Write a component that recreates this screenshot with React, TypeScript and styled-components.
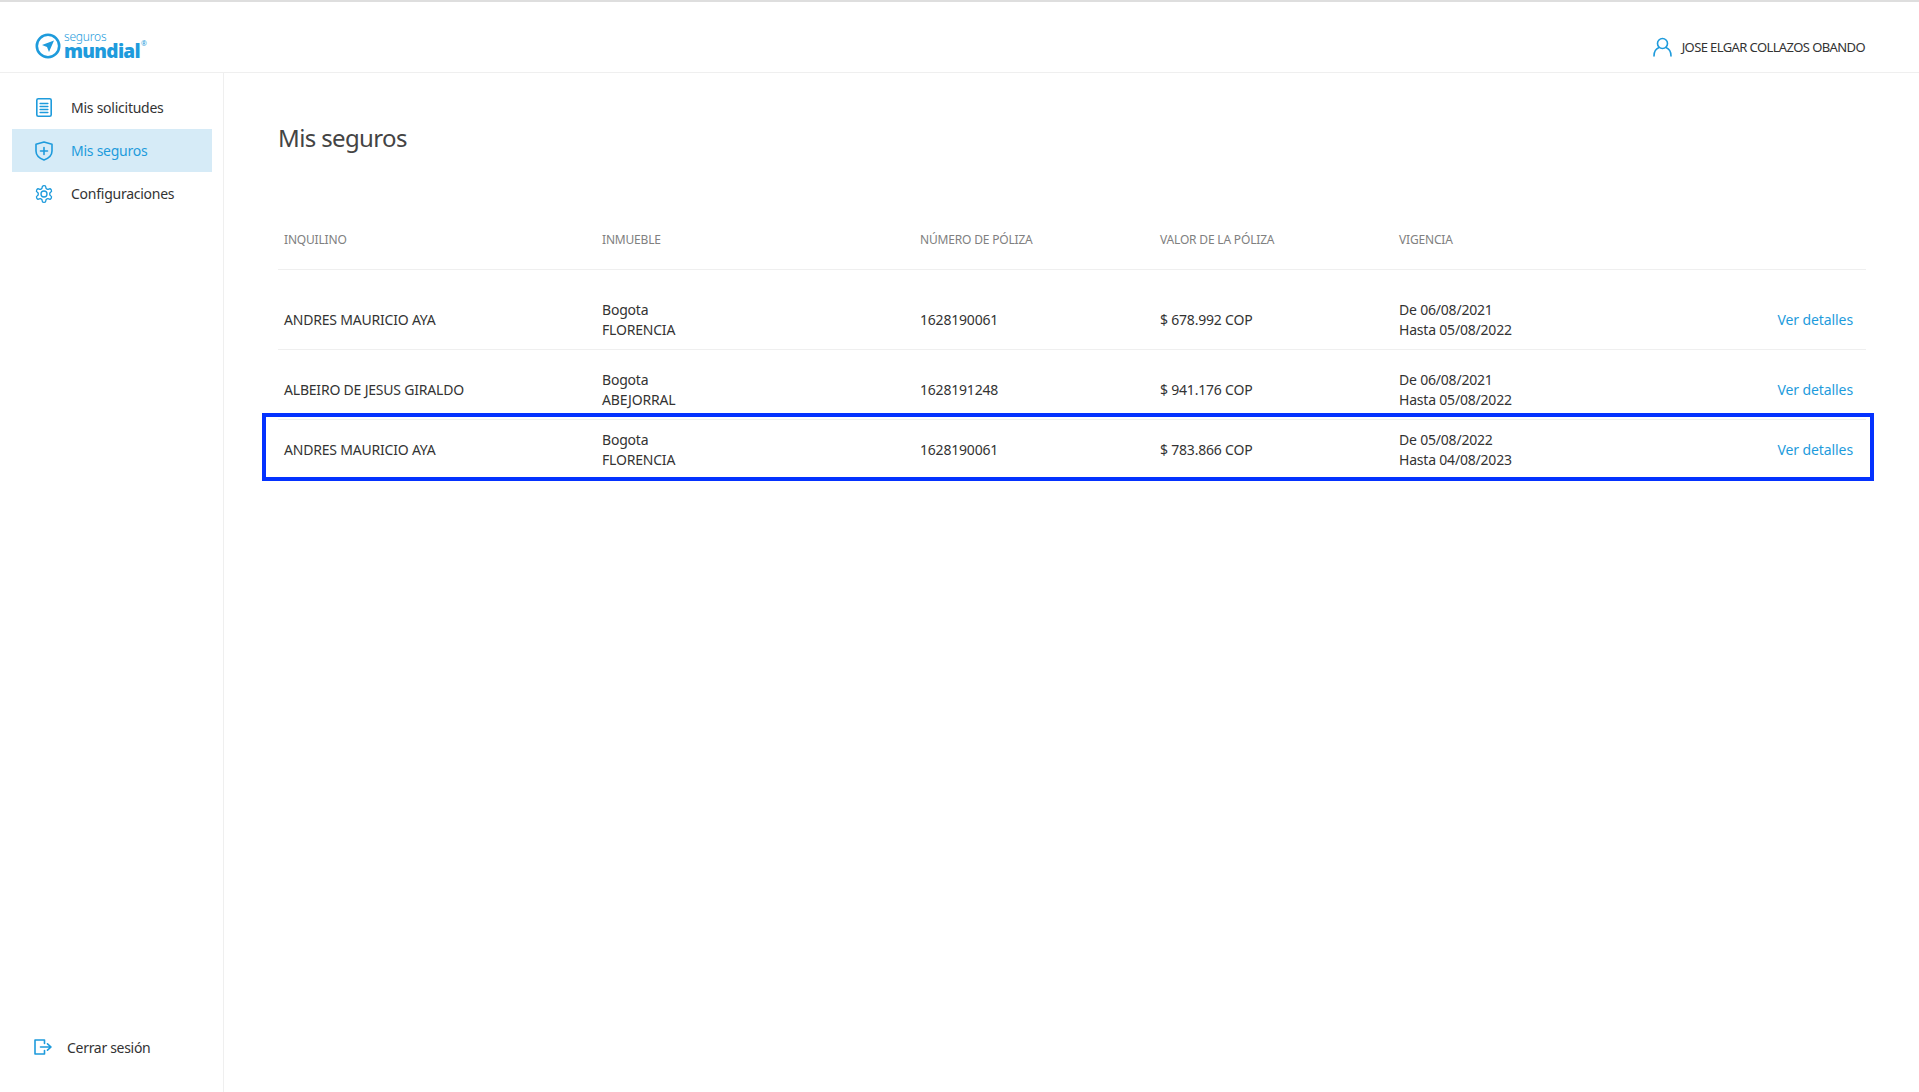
import React from "react";
import styled, { createGlobalStyle } from "styled-components";

const FONT = `"Noto Sans", "Open Sans", "Liberation Sans", sans-serif`;
const BLUE = "#1e9bdc";

const GlobalStyle = createGlobalStyle`
    html, body {
        margin: 0;
        padding: 0;
        background: #fff;
    }
    body {
        font-family: ${FONT};
        color: #333;
    }
    * {
        box-sizing: border-box;
    }
`;

const Page = styled.div`
    width: 1919px;
    height: 1092px;
    overflow: hidden;
    display: flex;
    flex-direction: column;
    border-top: 2px solid #dedede;
`;

const Header = styled.header`
    height: 71px;
    flex: none;
    display: flex;
    align-items: center;
    justify-content: space-between;
    padding: 20px 54px 0 35px;
    border-bottom: 1px solid #efefef;
`;

const Logo = styled.div`
    display: flex;
    align-items: center;
    gap: 3px;
    margin-top: -2px;
`;

const LogoWords = styled.div`
    display: flex;
    flex-direction: column;
    color: ${BLUE};
    position: relative;
`;

const LogoTop = styled.span`
    font-size: 12px;
    line-height: 11px;
    font-weight: 300;
    letter-spacing: -0.2px;
`;

const LogoBottom = styled.span`
    font-size: 19px;
    line-height: 19px;
    font-weight: 900;
    letter-spacing: -0.7px;
`;

const LogoMark = styled.span`
    position: absolute;
    left: 100%;
    top: 9px;
    margin-left: 1px;
    font-size: 7px;
    line-height: 8px;
`;

const User = styled.div`
    display: flex;
    align-items: center;
    gap: 10px;
    font-size: 13px;
    letter-spacing: -0.6px;
    color: #333;
`;

const Body = styled.div`
    flex: 1;
    display: flex;
    min-height: 0;
`;

const Sidebar = styled.aside`
    width: 224px;
    flex: none;
    border-right: 1px solid #efefef;
    padding: 13px 11px 0 12px;
    display: flex;
    flex-direction: column;
`;

const NavItem = styled.a<{ $active?: boolean }>`
    height: 43px;
    display: flex;
    align-items: center;
    gap: 17px;
    padding-left: 22px;
    font-size: 14px;
    letter-spacing: -0.25px;
    color: ${(p) => (p.$active ? BLUE : "#333")};
    background: ${(p) => (p.$active ? "#d6ebf7" : "transparent")};
`;

const NavIcon = styled.span`
    width: 20px;
    flex: none;
    display: flex;
    justify-content: center;
`;

const Logout = styled.a`
    margin-top: auto;
    margin-bottom: 25px;
    height: 40px;
    display: flex;
    align-items: center;
    gap: 15px;
    padding-left: 22px;
    font-size: 14px;
    letter-spacing: -0.3px;
    color: #333;
`;

const Main = styled.main`
    flex: 1;
    padding: 49px 53px 0 54px;
`;

const Title = styled.h1`
    margin: 0 0 65px;
    font-size: 24px;
    line-height: 32px;
    font-weight: 400;
    letter-spacing: -0.63px;
    color: #444;
`;

const Columns = `
    display: grid;
    grid-template-columns: 318px 318px 240px 239px 1fr auto;
    padding-left: 6px;
`;

const HeadRow = styled.div`
    ${Columns}
    height: 51px;
    padding-top: 11px;
    line-height: 20px;
    font-size: 12px;
    letter-spacing: -0.18px;
    color: #808080;
    border-bottom: 1px solid #efefef;
`;

const Row = styled.div<{ $top: number; $line?: boolean }>`
    ${Columns}
    position: relative;
    align-items: center;
    padding-top: ${(p) => p.$top}px;
    padding-bottom: 9px;
    padding-right: 13px;
    font-size: 14px;
    line-height: 20px;
    letter-spacing: -0.2px;
    color: #333;
    border-bottom: 1px solid ${(p) => (p.$line ? "#efefef" : "transparent")};
`;

const Highlight = styled.div`
    position: absolute;
    left: -16px;
    right: -8px;
    top: -7px;
    height: 68px;
    border: 4px solid #0432ff;
    pointer-events: none;
`;

const Detail = styled.a`
    color: ${BLUE};
    letter-spacing: -0.1px;
`;

const Stack = styled.div`
    display: flex;
    flex-direction: column;
`;

const Icon = styled.svg`
    flex: none;
    fill: none;
    stroke: ${BLUE};
    stroke-width: 1.6;
    stroke-linecap: round;
    stroke-linejoin: round;
`;

const rows = [
    { tenant: "ANDRES MAURICIO AYA", city: "Bogota", place: "FLORENCIA", policy: "1628190061", value: "$ 678.992 COP", from: "De 06/08/2021", to: "Hasta 05/08/2022", top: 30, line: true },
    { tenant: "ALBEIRO DE JESUS GIRALDO", city: "Bogota", place: "ABEJORRAL", policy: "1628191248", value: "$ 941.176 COP", from: "De 06/08/2021", to: "Hasta 05/08/2022", top: 20, line: true },
    { tenant: "ANDRES MAURICIO AYA", city: "Bogota", place: "FLORENCIA", policy: "1628190061", value: "$ 783.866 COP", from: "De 05/08/2022", to: "Hasta 04/08/2023", top: 10, mark: true },
];

const App: React.FC = () => (
    <Page>
        <GlobalStyle />
        <Header>
            <Logo>
                <svg width="26" height="26" viewBox="0 0 26 26">
                    <circle cx="13" cy="13" r="11.2" fill="none" stroke={BLUE} strokeWidth="2.6" />
                    <path d="M19 7.5 L7 12 L12 14 L14 19 Z" fill={BLUE} />
                </svg>
                <LogoWords>
                    <LogoTop>seguros</LogoTop>
                    <LogoBottom>mundial</LogoBottom>
                    <LogoMark>®</LogoMark>
                </LogoWords>
            </Logo>
            <User>
                <Icon width="19" height="20" viewBox="0 0 19 20">
                    <circle cx="9.5" cy="6.5" r="5" />
                    <path d="M1 19 C1 14.5 3.5 11.5 6 10.5 M18 19 C18 14.5 15.5 11.5 13 10.5" />
                </Icon>
                JOSE ELGAR COLLAZOS OBANDO
            </User>
        </Header>
        <Body>
            <Sidebar>
                <NavItem>
                    <NavIcon>
                        <Icon width="16" height="19" viewBox="0 0 16 19">
                            <rect x="0.8" y="0.8" width="14.4" height="17.4" rx="1.5" />
                            <path d="M4.2 5.5H11.8M4.2 8.5H11.8M4.2 11.5H11.8M4.2 14.5H11.8" />
                        </Icon>
                    </NavIcon>
                    Mis solicitudes
                </NavItem>
                <NavItem $active>
                    <NavIcon>
                        <Icon width="18" height="20" viewBox="0 0 18 20">
                            <path d="M9 1 L17 3.2 V10 C17 14.5 13 17.5 9 19 C5 17.5 1 14.5 1 10 V3.2 Z" />
                            <path d="M9 6.5V13.5M5.5 10H12.5" />
                        </Icon>
                    </NavIcon>
                    Mis seguros
                </NavItem>
                <NavItem>
                    <NavIcon>
                        <Icon width="20" height="20" viewBox="0 0 24 24">
                            <path d="M12.22 2h-.44a2 2 0 0 0-2 2v.18a2 2 0 0 1-1 1.73l-.43.25a2 2 0 0 1-2 0l-.15-.08a2 2 0 0 0-2.73.73l-.22.38a2 2 0 0 0 .73 2.73l.15.1a2 2 0 0 1 1 1.72v.51a2 2 0 0 1-1 1.74l-.15.09a2 2 0 0 0-.73 2.73l.22.38a2 2 0 0 0 2.73.73l.15-.08a2 2 0 0 1 2 0l.43.25a2 2 0 0 1 1 1.73V20a2 2 0 0 0 2 2h.44a2 2 0 0 0 2-2v-.18a2 2 0 0 1 1-1.73l.43-.25a2 2 0 0 1 2 0l.15.08a2 2 0 0 0 2.73-.73l.22-.39a2 2 0 0 0-.73-2.73l-.15-.08a2 2 0 0 1-1-1.74v-.5a2 2 0 0 1 1-1.74l.15-.09a2 2 0 0 0 .73-2.73l-.22-.38a2 2 0 0 0-2.73-.73l-.15.08a2 2 0 0 1-2 0l-.43-.25a2 2 0 0 1-1-1.73V4a2 2 0 0 0-2-2z" />
                            <circle cx="12" cy="12" r="3.6" />
                        </Icon>
                    </NavIcon>
                    Configuraciones
                </NavItem>
                <Logout>
                    <Icon width="18" height="16" viewBox="0 0 18 16">
                        <path d="M10.5 1H1V15H10.5M10.5 11.5V15M10.5 1V4.5" />
                        <path d="M6.5 8H17M13.5 4.8L17 8L13.5 11.2" />
                    </Icon>
                    Cerrar sesión
                </Logout>
            </Sidebar>
            <Main>
                <Title>Mis seguros</Title>
                <HeadRow>
                    <div>INQUILINO</div>
                    <div>INMUEBLE</div>
                    <div>NÚMERO DE PÓLIZA</div>
                    <div>VALOR DE LA PÓLIZA</div>
                    <div>VIGENCIA</div>
                </HeadRow>
                {rows.map((r, idx) => (
                    <Row key={idx} $top={r.top} $line={r.line}>
                        <div>{r.tenant}</div>
                        <Stack>
                            <span>{r.city}</span>
                            <span>{r.place}</span>
                        </Stack>
                        <div>{r.policy}</div>
                        <div>{r.value}</div>
                        <Stack>
                            <span>{r.from}</span>
                            <span>{r.to}</span>
                        </Stack>
                        <Detail>Ver detalles</Detail>
                        {r.mark && <Highlight />}
                    </Row>
                ))}
            </Main>
        </Body>
    </Page>
);

export default App;
